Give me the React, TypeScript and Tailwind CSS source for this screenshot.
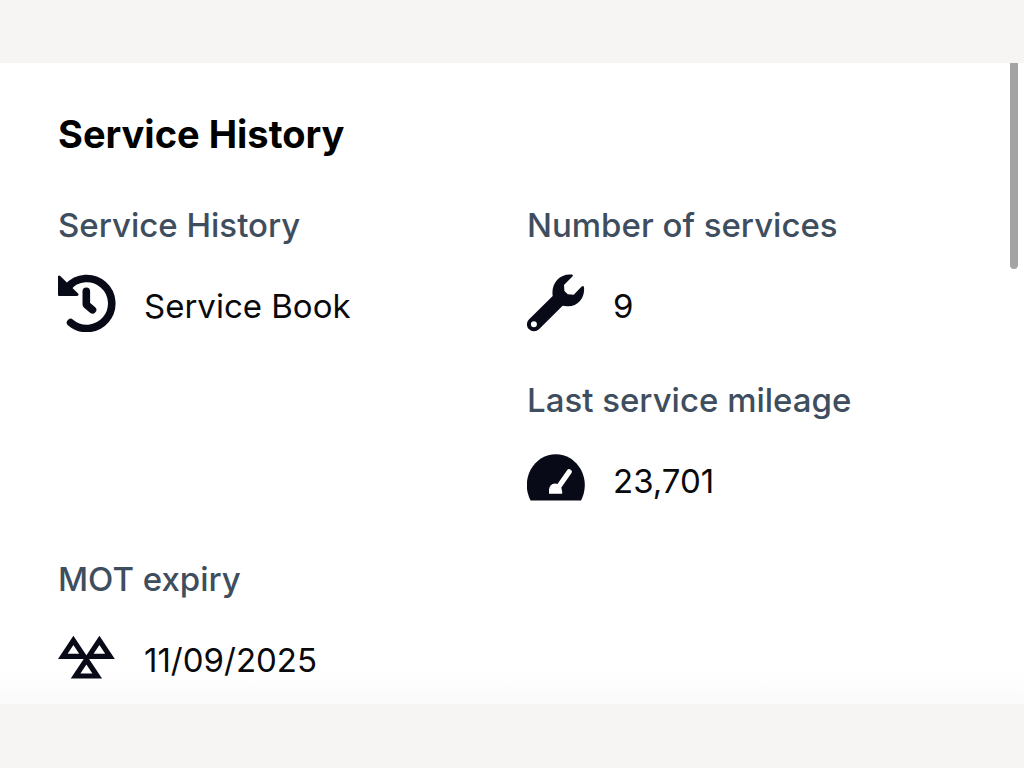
import type { ReactNode } from "react";

function HistoryIcon() {
  return (
    <svg viewBox="0 0 58 58" className="size-[58px]" aria-hidden="true">
      <g fill="none" stroke="currentColor" strokeWidth="7.6" strokeLinecap="round" strokeLinejoin="round">
        <path d="M12.6 48.6A25 25 0 1 0 10 13" />
        <path d="M28.3 17.4v13.2l6.2 5.2" />
      </g>
      <path
        d="M1.2 3 19 20.5H1.2z"
        fill="currentColor"
        stroke="currentColor"
        strokeWidth="3"
        strokeLinejoin="round"
      />
    </svg>
  );
}

function WrenchIcon() {
  return (
    <svg viewBox="0 0 58 58" className="size-[58px]" aria-hidden="true">
      <path
        fill="currentColor"
        fillRule="evenodd"
        d="M44.6 0.6Q46.6 0.8 45.4 2.4L37 11 37.4 17 40.8 20.2 46.7 20.8 54.7 12.6Q56.6 11.2 57 13.4C58.2 24.5 50 34 38.2 32L35.6 31.7 12 55.2A6.9 6.9 0 0 1 1.9 45.4L25.7 22C23.8 9.5 32.5 -0.6 44.6 0.6zM6.9 47.3a3 3 0 1 0 0 6 3 3 0 0 0 0-6z"
      />
    </svg>
  );
}

function GaugeIcon() {
  return (
    <svg viewBox="0 0 58 58" className="size-[58px]" aria-hidden="true">
      <path d="M3.6 51.5A29 31 0 1 1 54 51.5z" fill="currentColor" />
      <path d="M30.5 39.5 42.2 22.8" stroke="white" strokeWidth="5.2" strokeLinecap="round" />
      <path d="M22 44.8V40.5Q22.6 35 28 34.4q3 0 5 2.3 2.2 2.5 2.2 5.8v2.3z" fill="white" />
    </svg>
  );
}

function MotIcon() {
  return (
    <svg viewBox="0 0 58 58" className="size-[58px]" aria-hidden="true">
      <g fill="none" stroke="currentColor" strokeWidth="5.2">
        <path d="M15.4 12.4 26 28.4H4.8z" />
        <path d="M41.4 12.4 52 28.4H30.8z" />
        <path d="M28.4 31.8 39.2 48H17.6z" />
      </g>
    </svg>
  );
}

type DetailProps = {
  label: string;
  value: string;
  icon: ReactNode;
  className?: string;
};

function Detail({ label, value, icon, className = "" }: DetailProps) {
  return (
    <div className={className}>
      <dt className="text-[33px] leading-10 font-medium text-[#3f4e5e]">{label}</dt>
      <dd className="mt-[29px] flex items-end gap-7 text-[#080a17]">
        <span className="shrink-0">{icon}</span>
        <span className="text-[33px] leading-[52px] text-[#0a0a0c]">{value}</span>
      </dd>
    </div>
  );
}

export default function App() {
  return (
    <div className="min-h-screen bg-[#f6f5f4] py-[63px] font-['Inter',sans-serif]">
      <section className="relative bg-linear-to-b from-white from-95% to-[#fafafa] px-[58px] pt-[47px] pb-[18px]">
        <h2 className="text-[38px] leading-[48px] font-bold text-black">Service History</h2>
        <dl className="mt-[47px] grid grid-cols-2 gap-x-[30px] gap-y-12">
          <Detail label="Service History" value="Service Book" icon={<HistoryIcon />} />
          <Detail label="Number of services" value="9" icon={<WrenchIcon />} />
          <Detail
            className="col-start-2"
            label="Last service mileage"
            value="23,701"
            icon={<GaugeIcon />}
          />
          <Detail className="mt-1" label="MOT expiry" value="11/09/2025" icon={<MotIcon />} />
        </dl>
        {/* scroll thumb */}
        <div className="absolute top-0 right-1.5 h-[206px] w-2 rounded-b-full bg-[#a4a4a4]" />
      </section>
    </div>
  );
}
